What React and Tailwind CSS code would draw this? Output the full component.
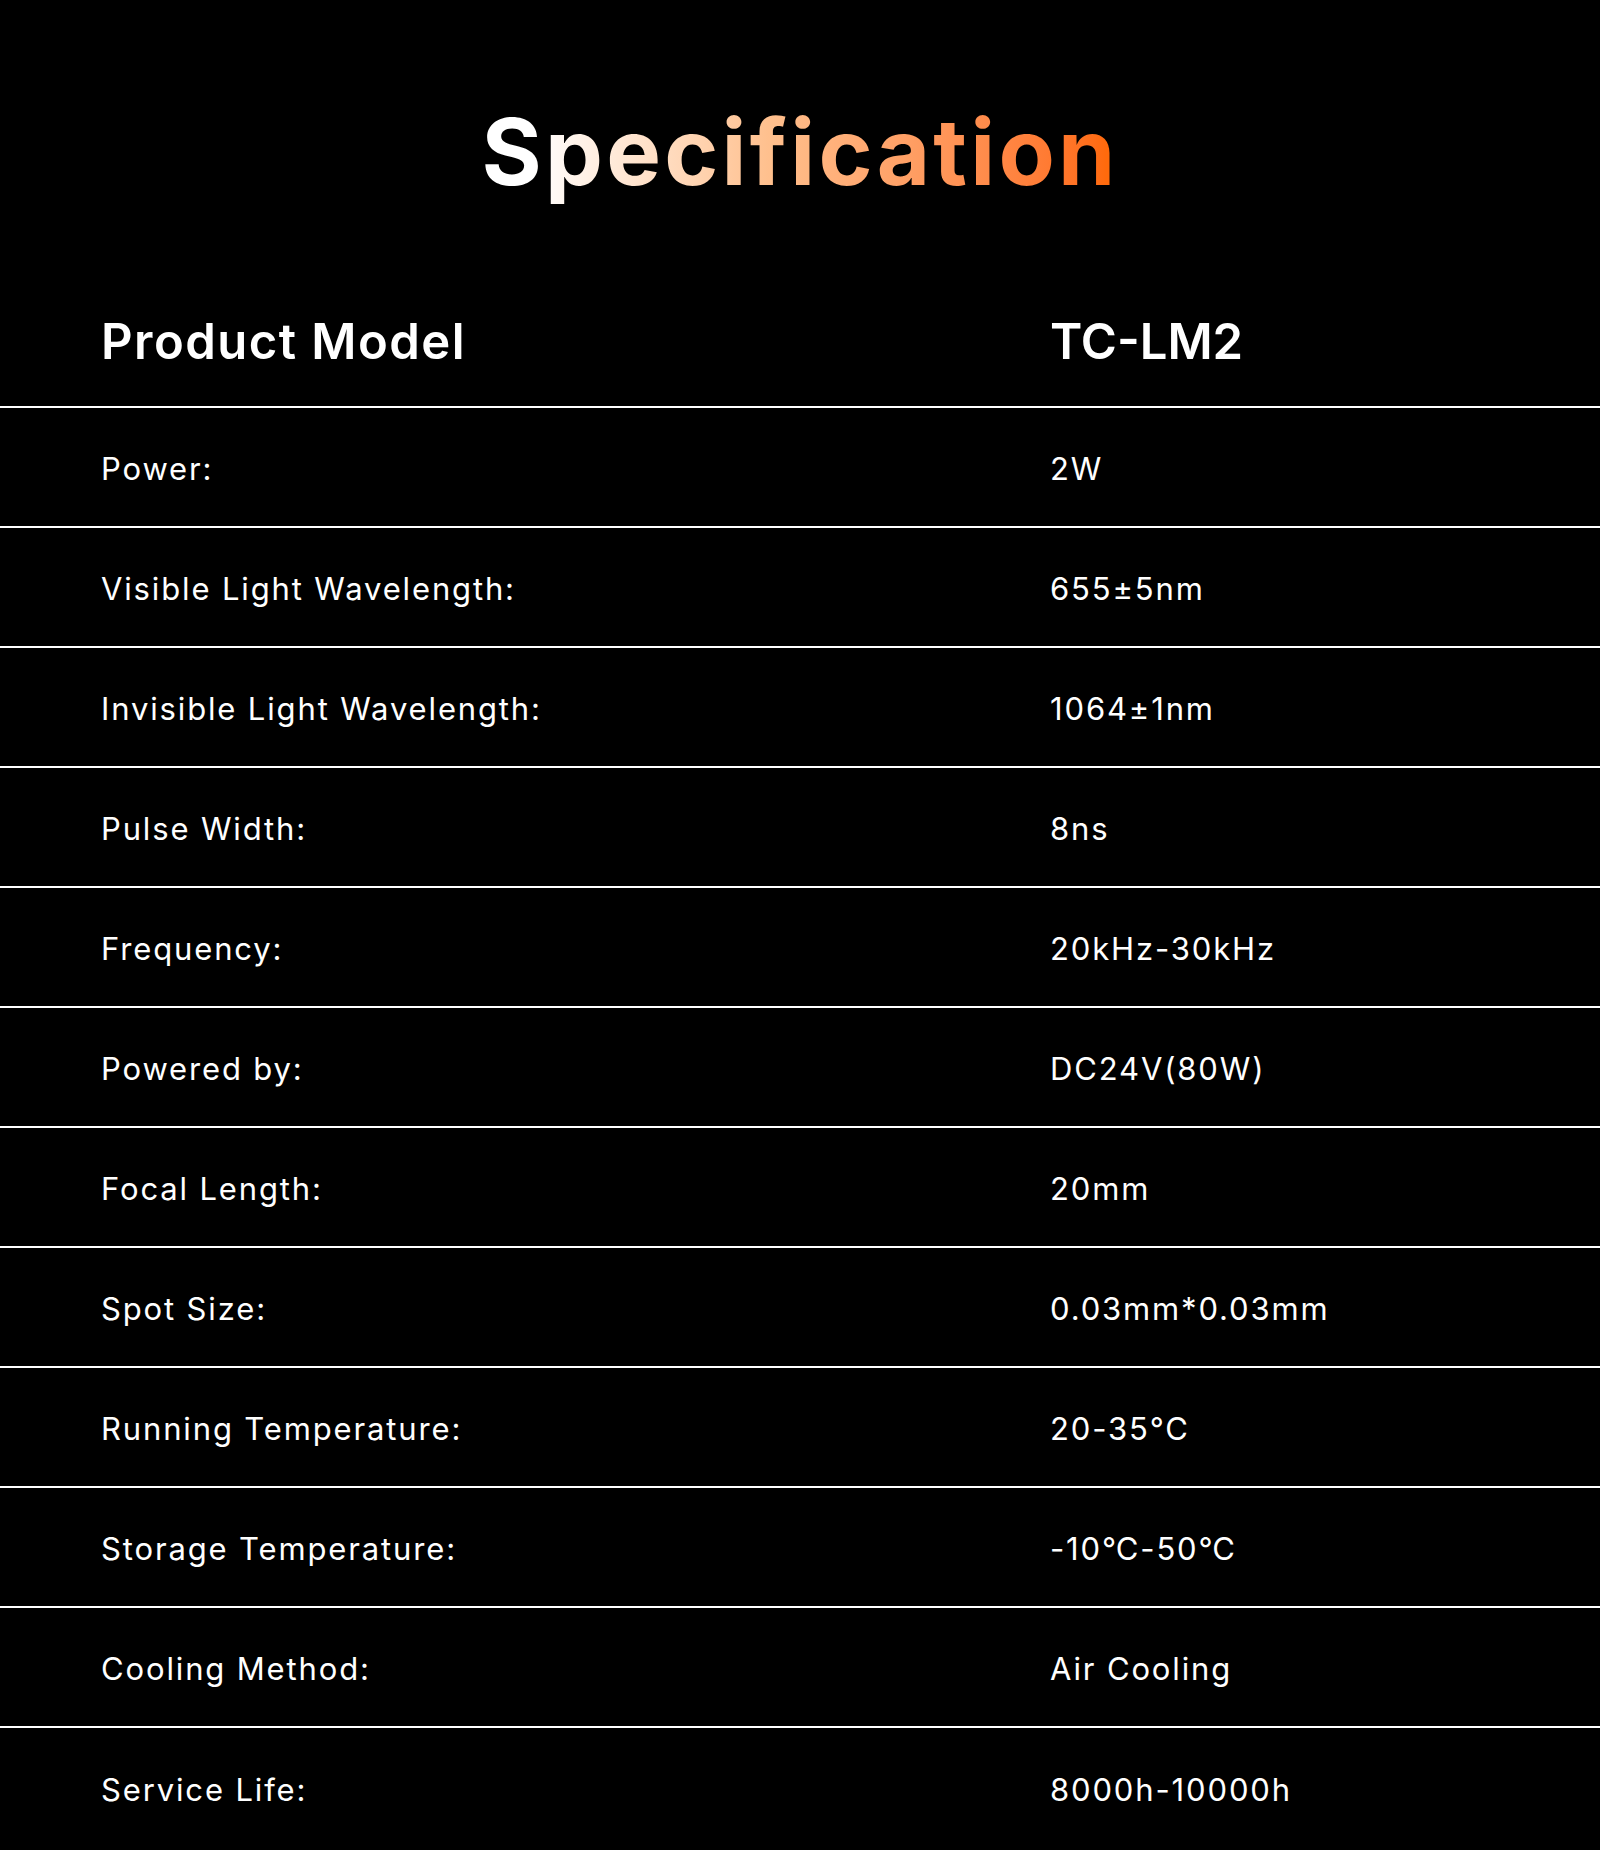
const specs = [
  ['Power:', '2W'],
  ['Visible Light Wavelength:', '655±5nm'],
  ['Invisible Light Wavelength:', '1064±1nm'],
  ['Pulse Width:', '8ns'],
  ['Frequency:', '20kHz-30kHz'],
  ['Powered by:', 'DC24V(80W)'],
  ['Focal Length:', '20mm'],
  ['Spot Size:', '0.03mm*0.03mm'],
  ['Running Temperature:', '20-35°C'],
  ['Storage Temperature:', '-10℃-50℃'],
  ['Cooling Method:', 'Air Cooling'],
  ['Service Life:', '8000h-10000h'],
];

export default function App() {
  return (
    <div className="w-[1600px] h-[1850px] bg-black text-white overflow-hidden font-['Inter','Liberation_Sans',sans-serif]">
      <div className="h-[288px] flex justify-center pt-[106px]">
        <h1 className="h-fit text-[92px] leading-none font-bold tracking-[0.035em] bg-gradient-to-r from-white from-8% via-[#ffc08e] via-45% to-[#ff6a0c] to-98% bg-clip-text text-transparent pb-3">
          Specification
        </h1>
      </div>

      <div className="h-[120px] flex items-center pb-[10px] border-b-2 border-white">
        <div className="w-[1050px] pl-[101px] text-[49px] font-semibold tracking-[0.03em]">Product Model</div>
        <div className="text-[49px] font-semibold">TC-LM2</div>
      </div>

      {specs.map(([label, value], i) => (
        <div
          key={label}
          className={`h-[120px] flex items-center pt-[5px] ${i < specs.length - 1 ? 'border-b-2 border-white' : ''}`}
        >
          <div className="w-[1050px] pl-[101px] text-[31px] tracking-[0.06em]">{label}</div>
          <div className="text-[31px] tracking-[0.06em]">{value}</div>
        </div>
      ))}
    </div>
  );
}
